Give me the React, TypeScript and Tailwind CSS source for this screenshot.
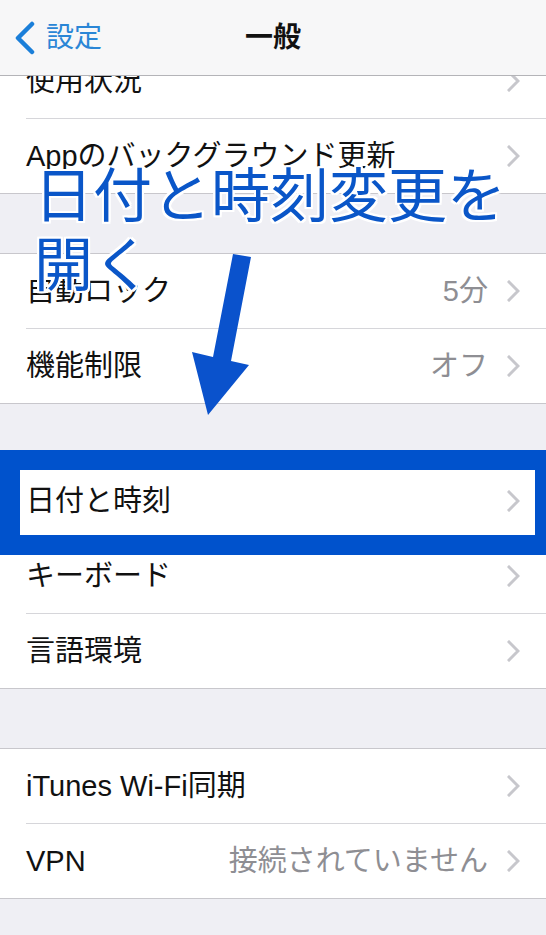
import React from "react";

const Chevron = () => (
  <svg width="13" height="22" viewBox="0 0 13 22" className="shrink-0">
    <path d="M2 2 L11 11 L2 20" fill="none" stroke="#c7c7cc" strokeWidth="3" strokeLinecap="square" />
  </svg>
);

type RowProps = { label: string; value?: string; last?: boolean };

const Row = ({ label, value }: RowProps) => (
  <div className="flex h-[74px] items-center bg-white pl-[26px] pr-[26px]">
    <span className="flex-1 text-[29px] leading-none text-[#111]">{label}</span>
    {value && <span className="mr-[19px] text-[29px] leading-none text-[#8e8e93]">{value}</span>}
    <Chevron />
  </div>
);

const Sep = () => (
  <div className="flex bg-white">
    <div className="ml-[26px] h-px flex-1 bg-[#d6d6da]" />
  </div>
);

const Group = ({ rows }: { rows: RowProps[] }) => (
  <div className="border-y border-[#c8c7cc] bg-white">
    {rows.map((r, i) => (
      <React.Fragment key={r.label}>
        {i > 0 && <Sep />}
        <Row {...r} />
      </React.Fragment>
    ))}
  </div>
);

export default function App() {
  return (
    <div className="relative flex h-[935px] w-[546px] flex-col overflow-hidden bg-[#efeff4] font-['Liberation_Sans','Noto_Sans_CJK_JP',sans-serif]">
      <header className="relative flex h-[76px] shrink-0 items-center border-b border-[#b4b4b8] bg-[#f7f7f8]">
        <div className="flex items-center pl-[14px]">
          <svg width="22" height="34" viewBox="0 0 22 34">
            <path d="M18 3 L4 17 L18 31" fill="none" stroke="#1b7fd9" strokeWidth="4.5" strokeLinecap="round" strokeLinejoin="round" />
          </svg>
          <span className="ml-[10px] text-[28px] leading-none text-[#2a86d6]">設定</span>
        </div>
        <div className="absolute left-0 right-0 top-0 flex h-full items-center justify-center">
          <span className="text-[28px] font-bold leading-none text-[#111]">一般</span>
        </div>
      </header>
      <div className="flex-1 overflow-hidden">
        <div className="-mt-[33px]">
          <Group rows={[{ label: "使用状況" }, { label: "Appのバックグラウンド更新" }]} />
          <div className="h-[59px]" />
          <Group rows={[{ label: "自動ロック", value: "5分" }, { label: "機能制限", value: "オフ" }]} />
          <div className="h-[59px]" />
          <Group rows={[{ label: "日付と時刻" }, { label: "キーボード" }, { label: "言語環境" }]} />
          <div className="h-[59px]" />
          <Group rows={[{ label: "iTunes Wi-Fi同期" }, { label: "VPN", value: "接続されていません" }]} />
        </div>
      </div>

      {/* annotation overlay */}
      <div className="absolute left-[34px] top-[157px] text-[59px] leading-[69px] text-[#0a56c8] [text-shadow:-2px_-2px_0_#fff,2px_-2px_0_#fff,-2px_2px_0_#fff,2px_2px_0_#fff,0_2px_0_#fff,0_-2px_0_#fff,2px_0_0_#fff,-2px_0_0_#fff] font-['Noto_Sans_CJK_JP',sans-serif]">
        日付と時刻変更を
        <br />
        開く
      </div>
      <svg className="pointer-events-none absolute left-0 top-0" width="546" height="935" viewBox="0 0 546 935">
        <polygon points="233,254 251,257 231,361 249,365 208,415 192,352 213,357" fill="#0a52cc" />
      </svg>
      <div className="absolute left-0 top-[450px] h-[105px] w-[555px] border-[20px] border-[#0052cc]" />
    </div>
  );
}
